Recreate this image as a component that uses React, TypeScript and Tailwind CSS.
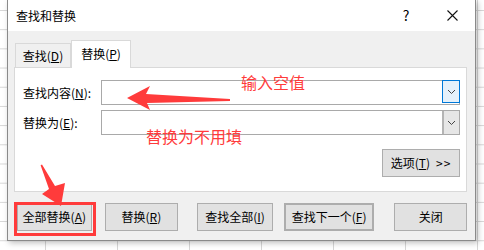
import React from "react";

const FONT = "font-['Microsoft_YaHei','Noto_Sans_CJK_SC',sans-serif]";

function Chevron() {
  return (
    <svg width="9" height="6" viewBox="0 0 9 6">
      <path d="M1 1 L4.5 4.5 L8 1" fill="none" stroke="#444" strokeWidth="1" />
    </svg>
  );
}

function Btn({ children, className = "" }: { children: React.ReactNode; className?: string }) {
  return (
    <div
      className={`h-[28px] flex items-center justify-center bg-[#e1e1e1] border border-[#adadad] text-[12px] text-black ${className}`}
    >
      {children}
    </div>
  );
}

function Combo({ focused }: { focused?: boolean }) {
  return (
    <div className="flex-1 h-[25px] border border-[#a9a9a9] bg-white flex justify-end">
      <div
        className={
          focused
            ? "w-[18px] h-full border border-[#0078d7] bg-[#e5f1fb] flex items-center justify-center -mt-px -mr-px h-[25px]"
            : "w-[17px] h-full border-l-2 border-[#b4b4b4] bg-[#e6e6e6] flex items-center justify-center"
        }
      >
        <Chevron />
      </div>
    </div>
  );
}

export default function App() {
  return (
    <div
      className={`relative w-[484px] h-[250px] overflow-hidden bg-white bg-[linear-gradient(to_bottom,#d6d6d6_1px,transparent_1px),linear-gradient(to_right,#d6d6d6_1px,transparent_1px)] bg-[length:72px_19.2px] bg-[position:45px_10px] ${FONT}`}
    >
      <div className="ml-[7px] w-[469px] h-[241px] border-x border-b border-[#8a8a8a] flex flex-col shadow-[2px_2px_6px_rgba(0,0,0,0.25)]">
        {/* title bar */}
        <div className="h-[31px] bg-white flex items-center pl-[8px] text-[12px] text-black">
          <span>查找和替换</span>
          <div className="ml-auto flex h-full">
            <div className="w-[46px] flex items-center justify-center text-[14px]">?</div>
            <div className="w-[46px] flex items-center justify-center">
              <svg width="11" height="11" viewBox="0 0 11 11">
                <path d="M0.5 0.5 L10.5 10.5 M10.5 0.5 L0.5 10.5" stroke="#111" strokeWidth="1.1" />
              </svg>
            </div>
          </div>
        </div>

        {/* body */}
        <div className="flex-1 bg-[#f0f0f0] pl-[6px] pr-[8px] pt-[9px] text-[12px] text-black">
          <div className="flex items-end h-[27px]">
            <div className="ml-[1px] w-[56px] h-[24px] border border-b-0 border-[#d9d9d9] flex items-center justify-center pt-[1px]">
              查找(<u>D</u>)
            </div>
            <div className="w-[60px] h-[28px] -mb-px relative z-10 bg-white border border-b-0 border-[#d9d9d9] flex items-center justify-center pb-[1px]">
              替换(<u>P</u>)
            </div>
          </div>

          <div className="h-[125px] bg-white border border-[#d9d9d9] pt-[12px] pl-[8px] pr-[6px]">
            <div className="flex items-center h-[25px]">
              <div className="w-[78px]">
                查找内容(<u>N</u>):
              </div>
              <Combo focused />
            </div>
            <div className="flex items-center h-[25px] mt-[5px]">
              <div className="w-[78px]">
                替换为(<u>E</u>):
              </div>
              <Combo />
            </div>
            <div className="flex justify-end mt-[14px]">
              <Btn className="w-[78px] gap-[6px]">
                <span>
                  选项(<u>T</u>)
                </span>
                <span className="tracking-[1px]">&gt;&gt;</span>
              </Btn>
            </div>
          </div>

          <div className="flex mt-[11px]">
            <Btn className="ml-[3px] w-[75px]">
              全部替换(<u>A</u>)
            </Btn>
            <Btn className="ml-[13px] w-[74px]">
              替换(<u>R</u>)
            </Btn>
            <Btn className="ml-[19px] w-[76px]">
              查找全部(<u>I</u>)
            </Btn>
            <Btn className="ml-[11px] w-[91px] border-2 border-[#0078d7]">
              查找下一个(<u>F</u>)
            </Btn>
            <Btn className="ml-[20px] w-[73px]">关闭</Btn>
          </div>
        </div>
      </div>

      {/* red annotations */}
      <div className="absolute left-[14px] top-[202px] w-[82px] h-[34px] border-[3px] border-[#ff3b3b]" />
      <div className="absolute left-[241px] top-[71px] text-[16px] leading-[22px] text-[#ff3b3b]">输入空值</div>
      <div className="absolute left-[146px] top-[125px] text-[16px] leading-[22px] text-[#ff3b3b]">替换为不用填</div>
      <svg className="absolute left-0 top-0" width="484" height="250" viewBox="0 0 484 250">
        <polygon
          points="127,98 150,86 146,94 230,99 230,101 147,103 150,110"
          fill="#ff3b3b"
        />
        <polygon
          points="61,206 65,183 55,186 42,164.6 40.6,165.3 49,189 42,194"
          fill="#ff3b3b"
        />
      </svg>
    </div>
  );
}
